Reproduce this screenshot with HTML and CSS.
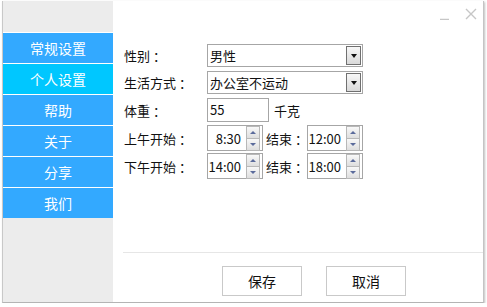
FILE: index.html
```html
<!DOCTYPE html>
<html lang="zh-CN">

<head>
    <meta charset="UTF-8">
    <meta name="viewport" content="width=device-width, initial-scale=1.0">
    <title>设置</title>
    <link rel="stylesheet" href="styles.css">
</head>

<body>
    <div class="window">
        <aside class="sidebar">
            <ul>
                <li>常规设置</li>
                <li class="active">个人设置</li>
                <li>帮助</li>
                <li>关于</li>
                <li>分享</li>
                <li>我们</li>
            </ul>
        </aside>

        <main class="content">
            <div class="titlebar">
                <svg class="btn-min" width="10" height="12" viewBox="0 0 10 12">
                    <line x1="0" y1="11.5" x2="9" y2="11.5" stroke="#c6c6c6" stroke-width="1.5" />
                </svg>
                <svg class="btn-close" width="12" height="12" viewBox="0 0 12 12">
                    <path d="M1 1 L11 11 M11 1 L1 11" stroke="#c6c6c6" stroke-width="1.4" fill="none" />
                </svg>
            </div>

            <section class="form">
                <div class="row r1">
                    <label>性别<span class="colon">：</span></label>
                    <div class="combo"><span>男性</span><i class="drop"></i></div>
                </div>
                <div class="row r2">
                    <label>生活方式<span class="colon">：</span></label>
                    <div class="combo"><span>办公室不运动</span><i class="drop"></i></div>
                </div>
                <div class="row r3">
                    <label>体重<span class="colon">：</span></label>
                    <div class="field">55</div>
                    <span class="unit">千克</span>
                </div>
                <div class="row r4">
                    <label>上午开始<span class="colon">：</span></label>
                    <div class="spin"><span>8:30</span><div class="arrows"><i class="up"></i><i class="down"></i></div></div>
                    <label class="sub">结束<span class="colon">：</span></label>
                    <div class="spin"><span>12:00</span><div class="arrows"><i class="up"></i><i class="down"></i></div></div>
                </div>
                <div class="row r5">
                    <label>下午开始<span class="colon">：</span></label>
                    <div class="spin"><span>14:00</span><div class="arrows"><i class="up"></i><i class="down"></i></div></div>
                    <label class="sub">结束<span class="colon">：</span></label>
                    <div class="spin"><span>18:00</span><div class="arrows"><i class="up"></i><i class="down"></i></div></div>
                </div>
            </section>

            <footer class="actions">
                <button>保存</button>
                <button>取消</button>
            </footer>
        </main>
    </div>
</body>

</html>
```

FILE: styles.css
```css
/* Page and window frame */
body {
    margin: 0;
    background-color: #fff;
    font-family: 'Noto Sans CJK SC', 'Microsoft YaHei', sans-serif;
    font-size: 13px;
    color: #111;
}

.window {
    display: flex;
    box-sizing: border-box;
    width: 482px;
    height: 302px;
    margin: 1px 0 0 2px;
    border-left: 1px solid #c8c8c8;
    border-right: 1px solid #c4c4c4;
    border-bottom: 1px solid #b4b4b4;
    box-shadow: 1px 1px 2px rgba(0, 0, 0, 0.25);
}

/* Left menu */
.sidebar {
    width: 110px;
    background-color: #ececec;
    padding-top: 31px;
}

.sidebar ul {
    list-style: none;
    margin: 0;
    padding: 0;
}

.sidebar li {
    height: 30px;
    line-height: 30px;
    border-top: 1px solid #fff;
    background-color: #33a9ff;
    color: #fff;
    font-size: 14px;
    text-align: center;
}

.sidebar li.active {
    background-color: #00c7ff;
}

/* Right side */
.content {
    flex: 1;
    display: flex;
    flex-direction: column;
    background-color: #fff;
}

.titlebar {
    height: 30px;
    display: flex;
    justify-content: flex-end;
    align-items: flex-start;
    padding: 7px 6px 0 0;
    box-sizing: border-box;
}

.titlebar svg {
    display: block;
}

.btn-close {
    margin-left: 15px;
}

.form {
    padding: 13px 0 0 11px;
}

.row {
    display: flex;
    align-items: center;
}

.row label {
    width: 83px;
    flex-shrink: 0;
    white-space: nowrap;
}

/* the Windows font centres the full-width colon in its cell */
.colon {
    padding-left: 3px;
}

.row .sub {
    width: 41px;
    margin-left: 3px;
}

.r1 { height: 23px; }
.r2 { height: 23px; margin-top: 4px; }
.r3 { height: 24px; margin-top: 4px; }
.r4 { height: 26px; margin-top: 3px; }
.r5 { height: 26px; margin-top: 2px; }

/* Drop-down box */
.combo {
    width: 156px;
    height: 100%;
    box-sizing: border-box;
    border: 1px solid #a6a6a6;
    display: flex;
    align-items: center;
    padding-left: 2px;
}

.combo span {
    flex: 1;
}

.combo .drop {
    width: 15px;
    height: 19px;
    margin-right: 1px;
    box-sizing: border-box;
    border: 1px solid #707070;
    background: linear-gradient(#f7f7f7, #d9d9d9);
    display: flex;
    align-items: center;
    justify-content: center;
}

.combo .drop::after {
    content: '';
    border-left: 3.5px solid transparent;
    border-right: 3.5px solid transparent;
    border-top: 4px solid #111;
}

/* Text box */
.field {
    width: 62px;
    height: 100%;
    box-sizing: border-box;
    border: 1px solid #a6a6a6;
    padding-left: 2px;
    line-height: 22px;
}

.unit {
    margin-left: 5px;
}

/* Spin box */
.spin {
    width: 56px;
    flex-shrink: 0;
    height: 100%;
    box-sizing: border-box;
    border: 1px solid #a6a6a6;
    display: flex;
    align-items: center;
}

.spin span {
    flex: 1;
    text-align: right;
    padding-right: 5px;
}

.spin .arrows {
    display: flex;
    flex-direction: column;
    margin-right: 2px;
}

.spin .arrows i {
    width: 12px;
    height: 11px;
    border: 1px solid #b8b8b8;
    background: linear-gradient(#f8f8f8, #dedede);
    display: flex;
    align-items: center;
    justify-content: center;
}

.spin .arrows i + i {
    margin-top: -1px;
}

.spin .up::after {
    content: '';
    border-left: 3px solid transparent;
    border-right: 3px solid transparent;
    border-bottom: 3px solid #5b6b9b;
}

.spin .down::after {
    content: '';
    border-left: 3px solid transparent;
    border-right: 3px solid transparent;
    border-top: 3px solid #5b6b9b;
}

/* Bottom buttons */
.actions {
    margin-top: auto;
    margin-left: 10px;
    border-top: 1px solid #e6e6e6;
    padding: 13px 0 6px 99px;
    display: flex;
    gap: 24px;
}

.actions button {
    width: 80px;
    height: 30px;
    background-color: #fff;
    border: 1px solid #c9c9c9;
    font-family: inherit;
    font-size: 14px;
    color: #111;
    padding: 0;
}
```
